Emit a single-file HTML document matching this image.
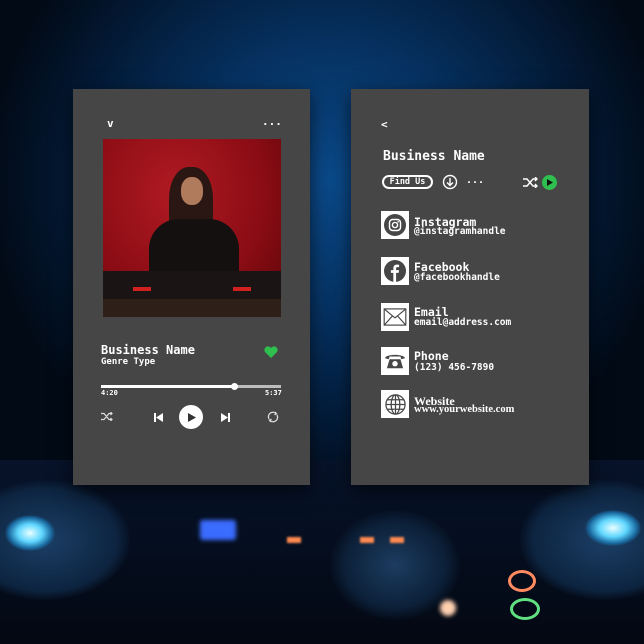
<!DOCTYPE html>
<html><head><meta charset="utf-8"><style>
*{margin:0;padding:0;box-sizing:border-box}
body{width:644px;height:644px;overflow:hidden;position:relative;background:#04101f;font-family:"DejaVu Sans Mono","Liberation Mono",monospace;color:#fff}
.bg{position:absolute;inset:0;background:radial-gradient(ellipse 340px 330px at 330px 180px,#0b4a8a 0%,#063262 40%,#031a36 75%,#020a16 100%)}
.bot{position:absolute;left:0;top:460px;width:644px;height:184px;background:linear-gradient(#07132a,#030812)}
.glow{position:absolute;border-radius:50%}
.card{position:absolute;top:89px;height:396px;background:#464646;box-shadow:0 6px 18px rgba(0,0,0,.6)}
.b{font-weight:bold}
.abs{position:absolute}
.ic{position:absolute;left:30px;width:28px;height:28px;background:#fff;display:flex;align-items:center;justify-content:center}
.t1{position:absolute;left:63px;font-size:11.5px;font-weight:bold;line-height:12px}
.t2{position:absolute;left:63px;font-size:9.5px;font-weight:bold;line-height:10px}
</style></head><body>
<div class="bg"></div>
<div class="bot"></div>
<div class="glow" style="left:-40px;top:480px;width:170px;height:120px;background:radial-gradient(ellipse,#1b3f66 0%,#0d2440 60%,transparent 72%)"></div>
<div class="glow" style="left:5px;top:515px;width:50px;height:36px;background:radial-gradient(ellipse,#e8ffff 0%,#5fd6ff 35%,#1a6aa0 60%,transparent 72%)"></div>
<div class="glow" style="left:520px;top:480px;width:170px;height:120px;background:radial-gradient(ellipse,#1b3f66 0%,#0d2440 60%,transparent 72%)"></div>
<div class="glow" style="left:585px;top:510px;width:56px;height:36px;background:radial-gradient(ellipse,#e8ffff 0%,#5fd6ff 35%,#1a6aa0 60%,transparent 72%)"></div>
<div class="glow" style="left:330px;top:510px;width:130px;height:110px;background:radial-gradient(ellipse,#1c3c60 0%,#0c2038 55%,transparent 72%)"></div>
<div class="abs" style="left:200px;top:520px;width:36px;height:20px;background:#3a6cff;border-radius:3px;filter:blur(2px)"></div>
<div class="abs" style="left:287px;top:537px;width:14px;height:6px;background:#ff8a50;filter:blur(1px)"></div>
<div class="abs" style="left:360px;top:537px;width:14px;height:6px;background:#ff8a50;filter:blur(1px)"></div>
<div class="abs" style="left:390px;top:537px;width:14px;height:6px;background:#ff8a50;filter:blur(1px)"></div>
<div class="glow" style="left:508px;top:570px;width:28px;height:22px;border:3px solid #ff8a60"></div>
<div class="glow" style="left:510px;top:598px;width:30px;height:22px;border:3px solid #60e080"></div>
<div class="glow" style="left:440px;top:600px;width:16px;height:16px;background:#ffd0b0;filter:blur(2px)"></div>

<div class="card" style="left:73px;width:237px">
  <div class="abs b" style="left:34px;top:28px;font-size:11px">v</div>
  <div class="abs b" style="left:189px;top:26px;font-size:11px">...</div>
  <div class="abs" style="left:30px;top:50px;width:178px;height:178px;background:radial-gradient(ellipse at 40% 30%,#b01a22,#8a0c14 60%,#5a0608)">
    <div class="abs" style="left:66px;top:28px;width:44px;height:70px;border-radius:45% 45% 20% 20%;background:#2a1612"></div>
    <div class="abs" style="left:78px;top:38px;width:22px;height:28px;border-radius:45%;background:#b07a5c"></div>
    <div class="abs" style="left:46px;top:80px;width:90px;height:60px;border-radius:30px 30px 0 0;background:#151010"></div>
    <div class="abs" style="left:0;top:132px;width:178px;height:30px;background:#1a1414"></div>
    <div class="abs" style="left:30px;top:148px;width:18px;height:4px;background:#d02020"></div>
    <div class="abs" style="left:130px;top:148px;width:18px;height:4px;background:#d02020"></div>
    <div class="abs" style="left:0;top:160px;width:178px;height:18px;background:#2e2018"></div>
  </div>
  <div class="abs b" style="left:28px;top:254px;font-size:12px">Business Name</div>
  <div class="abs b" style="left:28px;top:268px;font-size:9px">Genre Type</div>
  <svg class="abs" style="left:191px;top:257px" width="14" height="12" viewBox="0 0 14 12"><path d="M7 12 L1 6 A3.2 3.2 0 0 1 7 2 A3.2 3.2 0 0 1 13 6 Z" fill="#2fbf4f"/></svg>
  <div class="abs" style="left:28px;top:296px;width:180px;height:3px;background:#bdbdbd"></div>
  <div class="abs" style="left:28px;top:296px;width:134px;height:3px;background:#fff"></div>
  <div class="abs" style="left:158px;top:294px;width:7px;height:7px;border-radius:50%;background:#fff"></div>
  <div class="abs b" style="left:28px;top:300px;font-size:7px">4:20</div>
  <div class="abs b" style="left:192px;top:300px;font-size:7px">5:37</div>
  <svg class="abs" style="left:28px;top:323px" width="12" height="9" viewBox="0 0 12 9" fill="none" stroke="#ddd" stroke-width="1.2"><path d="M0 1.5 H3 L8 7.5 H11 M0 7.5 H3 L8 1.5 H11 M9.5 0 L11 1.5 L9.5 3 M9.5 6 L11 7.5 L9.5 9"/></svg>
  <svg class="abs" style="left:81px;top:324px" width="9" height="9" viewBox="0 0 9 9"><rect x="0" y="0" width="2" height="9" fill="#fff"/><path d="M9 0 L2 4.5 L9 9Z" fill="#fff"/></svg>
  <div class="abs" style="left:106px;top:316px;width:24px;height:24px;border-radius:50%;background:#fff"></div>
  <svg class="abs" style="left:115px;top:324px" width="8" height="9" viewBox="0 0 8 9"><path d="M0 0 L8 4.5 L0 9Z" fill="#333"/></svg>
  <svg class="abs" style="left:148px;top:324px" width="9" height="9" viewBox="0 0 9 9"><rect x="7" y="0" width="2" height="9" fill="#fff"/><path d="M0 0 L7 4.5 L0 9Z" fill="#fff"/></svg>
  <svg class="abs" style="left:194px;top:322px" width="12" height="12" viewBox="0 0 12 12" fill="none" stroke="#ddd" stroke-width="1.3"><path d="M2 8 A4.5 4.5 0 0 1 9 2.5 M10 4 A4.5 4.5 0 0 1 3 9.5"/><path d="M8 1 L9.5 2.8 L7.5 3.8 M4 11 L2.5 9.2 L4.5 8.2"/></svg>
</div>

<div class="card" style="left:351px;width:238px">
  <div class="abs b" style="left:30px;top:29px;font-size:11px">&lt;</div>
  <div class="abs b" style="left:32px;top:60px;font-size:13px">Business Name</div>
  <div class="abs b" style="left:31px;top:86px;width:51px;height:14px;border:2px solid #fff;border-radius:8px;font-size:8.5px;line-height:10px;text-align:center">Find Us</div>
  <svg class="abs" style="left:91px;top:85px" width="16" height="16" viewBox="0 0 16 16" fill="none" stroke="#fff" stroke-width="1.4"><circle cx="8" cy="8" r="6.5"/><path d="M8 4 V11 M5 8.5 L8 11.5 L11 8.5"/></svg>
  <div class="abs b" style="left:115px;top:86px;font-size:10px">...</div>
  <svg class="abs" style="left:172px;top:88px" width="15" height="11" viewBox="0 0 15 11" fill="none" stroke="#fff" stroke-width="1.4"><path d="M0 2 H4 L10 9 H14 M0 9 H4 L10 2 H14 M12 0 L14 2 L12 4 M12 7 L14 9 L12 11"/></svg>
  <div class="abs" style="left:191px;top:86px;width:15px;height:15px;border-radius:50%;background:#2fbf4f"></div>
  <svg class="abs" style="left:196px;top:90px" width="6" height="7" viewBox="0 0 6 7"><path d="M0 0 L6 3.5 L0 7Z" fill="#111"/></svg>

  <div class="ic" style="top:122px"><svg width="22" height="22" viewBox="0 0 24 24"><circle cx="12" cy="12" r="12" fill="#464646"/><rect x="6" y="6" width="12" height="12" rx="3.5" fill="none" stroke="#fff" stroke-width="1.6"/><circle cx="12" cy="12" r="2.8" fill="none" stroke="#fff" stroke-width="1.6"/><circle cx="15.5" cy="8.5" r=".9" fill="#fff"/></svg></div>
  <div class="t1" style="top:127px">Instagram</div><div class="t2" style="top:138px">@instagramhandle</div>

  <div class="ic" style="top:168px"><svg width="22" height="22" viewBox="0 0 24 24"><circle cx="12" cy="12" r="12" fill="#464646"/><path d="M13.2 24 V14 H16 L16.4 11 H13.2 V9.2 C13.2 8.3 13.5 7.8 14.7 7.8 H16.5 V5.2 C16 5.1 15 5 14 5 C11.7 5 10.2 6.4 10.2 8.9 V11 H7.5 V14 H10.2 V24Z" fill="#fff"/></svg></div>
  <div class="t1" style="top:172px">Facebook</div><div class="t2" style="top:184px">@facebookhandle</div>

  <div class="ic" style="top:214px"><svg width="24" height="18" viewBox="0 0 26 20" fill="none" stroke="#464646" stroke-width="1.3"><rect x="1" y="1" width="24" height="18"/><path d="M1 1 L13 11 L25 1 M1 19 L10 9 M25 19 L16 9"/></svg></div>
  <div class="t1" style="top:217px">Email</div><div class="t2" style="top:229px">email@address.com</div>

  <div class="ic" style="top:258px"><svg width="22" height="18" viewBox="0 0 24 20"><path d="M1 7 C1 2 23 2 23 7 L19 8 L18 5 H6 L5 8Z" fill="#464646"/><path d="M6 8 H18 L21 18 H3Z" fill="#464646"/><circle cx="12" cy="13" r="3" fill="#fff"/></svg></div>
  <div class="t1" style="top:261px">Phone</div><div class="t2" style="top:274px">(123) 456-7890</div>

  <div class="ic" style="top:301px"><svg width="23" height="23" viewBox="0 0 24 24" fill="none" stroke="#464646" stroke-width="1.3"><circle cx="12" cy="12" r="10"/><ellipse cx="12" cy="12" rx="4.5" ry="10"/><path d="M12 2 V22 M2 12 H22 M3.5 7 H20.5 M3.5 17 H20.5"/></svg></div>
  <div class="t1" style="top:306px;font-family:'Liberation Serif',serif;font-size:12px">Website</div><div class="t2" style="top:316px;font-family:'Liberation Serif',serif;font-size:10.5px">www.yourwebsite.com</div>
</div>
</body></html>
